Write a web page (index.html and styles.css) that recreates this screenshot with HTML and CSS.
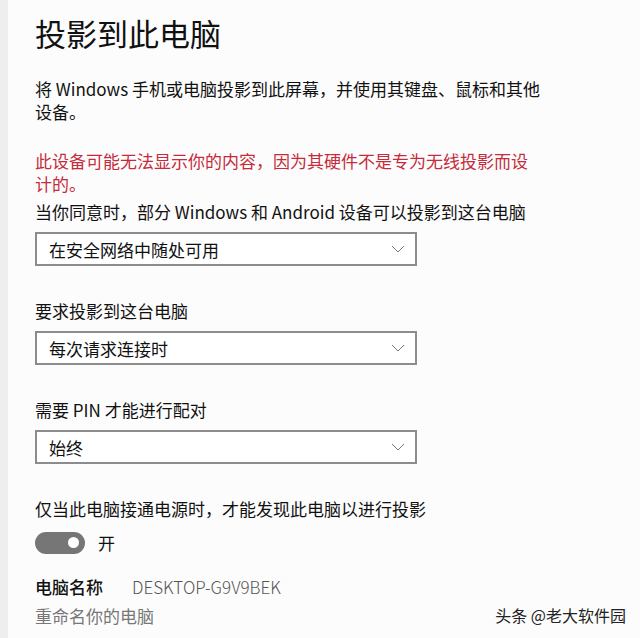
FILE: index.html
```html
<!DOCTYPE html>
<html lang="zh-CN">
<head>
<meta charset="utf-8">
<title>投影到此电脑</title>
<link rel="stylesheet" href="styles.css">
</head>
<body>
<div class="app">
  <div class="strip"></div>
  <main class="content">
    <h1 class="title">投影到此电脑</h1>
    <p class="desc">将 Windows 手机或电脑投影到此屏幕，并使用其键盘、鼠标和其他设备。</p>
    <p class="warn">此设备可能无法显示你的内容，因为其硬件不是专为无线投影而设计的。</p>

    <div class="group first">
      <div class="label">当你同意时，部分 Windows 和 Android 设备可以投影到这台电脑</div>
      <div class="select"><span>在安全网络中随处可用</span>
        <svg class="chev" width="14" height="8" viewBox="0 0 14 8"><path d="M1 1 L7 7 L13 1" fill="none" stroke="#777" stroke-width="1"/></svg>
      </div>
    </div>

    <div class="group">
      <div class="label">要求投影到这台电脑</div>
      <div class="select"><span>每次请求连接时</span>
        <svg class="chev" width="14" height="8" viewBox="0 0 14 8"><path d="M1 1 L7 7 L13 1" fill="none" stroke="#777" stroke-width="1"/></svg>
      </div>
    </div>

    <div class="group">
      <div class="label">需要 PIN 才能进行配对</div>
      <div class="select"><span>始终</span>
        <svg class="chev" width="14" height="8" viewBox="0 0 14 8"><path d="M1 1 L7 7 L13 1" fill="none" stroke="#777" stroke-width="1"/></svg>
      </div>
    </div>

    <div class="group">
      <div class="label">仅当此电脑接通电源时，才能发现此电脑以进行投影</div>
      <div class="toggle-row">
        <div class="toggle"><div class="knob"></div></div>
        <span class="toggle-text">开</span>
      </div>
    </div>

    <div class="name-row">
      <span class="name-key">电脑名称</span>
      <span class="name-val">DESKTOP-G9V9BEK</span>
    </div>
    <div class="rename">重命名你的电脑</div>
  </main>
  <div class="watermark">头条 @老大软件园</div>
</div>
</body>
</html>
```
FILE: styles.css
```css
html, body {
  margin: 0;
  padding: 0;
  background: #fcfcfc;
}
body {
  font-family: "Noto Sans CJK SC", "Noto Sans", sans-serif;
  color: #111;
  width: 640px;
  height: 638px;
  overflow: hidden;
}
.app {
  position: relative;
  display: flex;
  height: 638px;
}
.strip {
  width: 8px;
  flex: none;
  background: #eeeeee;
}
.content {
  flex: none;
  width: 505px;
  padding: 13px 0 0 27px;
}
.title {
  margin: 0;
  font-size: 31px;
  font-weight: 400;
  line-height: 40px;
  color: #111;
}
.desc, .warn {
  margin: 0;
  font-size: 17px;
  line-height: 23px;
}
.desc {
  margin-top: 24px;
}
.warn {
  margin-top: 26px;
  color: #c52b3b;
}
.label {
  font-size: 17px;
  line-height: 23px;
}
.group {
  margin-top: 33px;
}
.group.first {
  margin-top: 5px;
}
.select {
  box-sizing: border-box;
  margin-top: 9px;
  width: 382px;
  height: 34px;
  border: 2px solid #8c8c8c;
  background: #fff;
  display: flex;
  align-items: center;
  justify-content: space-between;
  padding: 0 10px 0 12px;
  font-size: 17px;
}
.chev {
  display: block;
}
.toggle-row {
  margin-top: 10px;
  display: flex;
  align-items: center;
  gap: 13px;
}
.toggle {
  width: 50px;
  height: 22px;
  border-radius: 11px;
  background: #767676;
  display: flex;
  align-items: center;
  justify-content: flex-end;
  padding-right: 6px;
  box-sizing: border-box;
}
.knob {
  width: 11px;
  height: 11px;
  border-radius: 50%;
  background: #fff;
}
.toggle-text {
  font-size: 17px;
}
.name-row {
  margin-top: 20px;
  display: flex;
  gap: 29px;
  font-size: 17px;
  line-height: 23px;
}
.name-key {
  font-weight: 500;
  color: #111;
}
.name-val {
  color: #555;
  font-weight: 300;
}
.rename {
  margin-top: 6px;
  font-size: 17px;
  line-height: 23px;
  color: #777;
}
.watermark {
  position: absolute;
  right: 14px;
  top: 604px;
  font-size: 16px;
  line-height: 22px;
  color: #222;
}
```
